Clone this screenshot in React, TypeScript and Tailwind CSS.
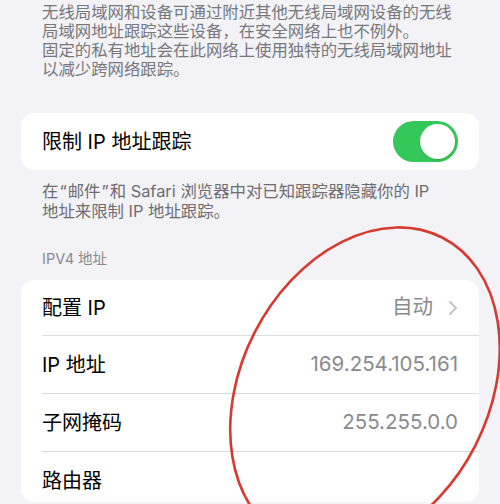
import React from "react";

function Toggle() {
  return (
    <div className="w-[65px] h-[41px] rounded-full bg-[#34c759] p-[3px] flex justify-end">
      <div className="w-[35px] h-[35px] rounded-full bg-white shadow-[0_1px_2px_rgba(0,0,0,0.15)]" />
    </div>
  );
}

function Chevron() {
  return (
    <svg width="10" height="16" viewBox="0 0 10 16" fill="none">
      <polyline
        points="2,2 8,8 2,14"
        stroke="#c4c4c7"
        strokeWidth="2"
        strokeLinecap="round"
        strokeLinejoin="round"
      />
    </svg>
  );
}

interface RowProps {
  label: string;
  value?: string;
  chevron?: boolean;
  last?: boolean;
  height: string;
}

function Row({ label, value, chevron, last, height }: RowProps) {
  return (
    <div className={`flex pl-[21px] ${height}`}>
      <div
        className={`flex-1 flex items-center justify-between pr-[21px] ${
          last ? "" : "border-b border-[#dcdce0]"
        }`}
      >
        <span className="text-[20px] text-black">{label}</span>
        <div className="flex items-center gap-[15px]">
          {value && <span className="text-[20.5px] text-[#8a8a8e]">{value}</span>}
          {chevron && <Chevron />}
        </div>
      </div>
    </div>
  );
}

export default function App() {
  return (
    <div className="relative w-[500px] h-[504px] overflow-hidden bg-[#f2f2f7] font-[Inter,'Noto_Sans_CJK_SC',sans-serif]">
      {/* 私有地址说明 */}
      <p className="pt-[3px] px-[42px] text-[16.4px] leading-[19px] text-[#77777c] whitespace-nowrap">
        无线局域网和设备可通过附近其他无线局域网设备的无线
        <br />
        局域网地址跟踪这些设备，在安全网络上也不例外。
        <br />
        固定的私有地址会在此网络上使用独特的无线局域网地址
        <br />
        以减少跨网络跟踪。
      </p>

      {/* 限制 IP 地址跟踪 */}
      <div className="mx-[21px] mt-[34px] h-[57px] rounded-[13px] bg-white flex items-center justify-between px-[21px]">
        <span className="text-[20px] text-black">限制 IP 地址跟踪</span>
        <Toggle />
      </div>

      <p className="mt-[12px] px-[42px] text-[16.4px] leading-[19.5px] text-[#6d6d72] whitespace-nowrap">
        在<span className="px-[1px]">“</span>邮件<span className="px-[1px]">”</span>和 Safari
        浏览器中对已知跟踪器隐藏你的 IP
        <br />
        地址来限制 IP 地址跟踪。
      </p>

      {/* IPV4 */}
      <div className="mt-[29px] px-[42px] text-[14.5px] leading-[18px] text-[#8a8a8e]">
        IPV4 地址
      </div>

      <div className="mx-[21px] mt-[12px] rounded-[13px] bg-white">
        <Row label="配置 IP" value="自动" chevron height="h-[56px]" />
        <Row label="IP 地址" value="169.254.105.161" height="h-[58px]" />
        <Row label="子网掩码" value="255.255.0.0" height="h-[58px]" />
        <Row label="路由器" last height="h-[50px] pt-[8px]" />
      </div>

      {/* 红色圈注 */}
      <svg
        className="absolute inset-0 pointer-events-none"
        width="500"
        height="504"
        viewBox="0 0 500 504"
      >
        <ellipse
          cx="365"
          cy="389"
          rx="124"
          ry="170"
          transform="rotate(27 365 389)"
          fill="none"
          stroke="#d63a30"
          strokeWidth="2.6"
        />
      </svg>
    </div>
  );
}
